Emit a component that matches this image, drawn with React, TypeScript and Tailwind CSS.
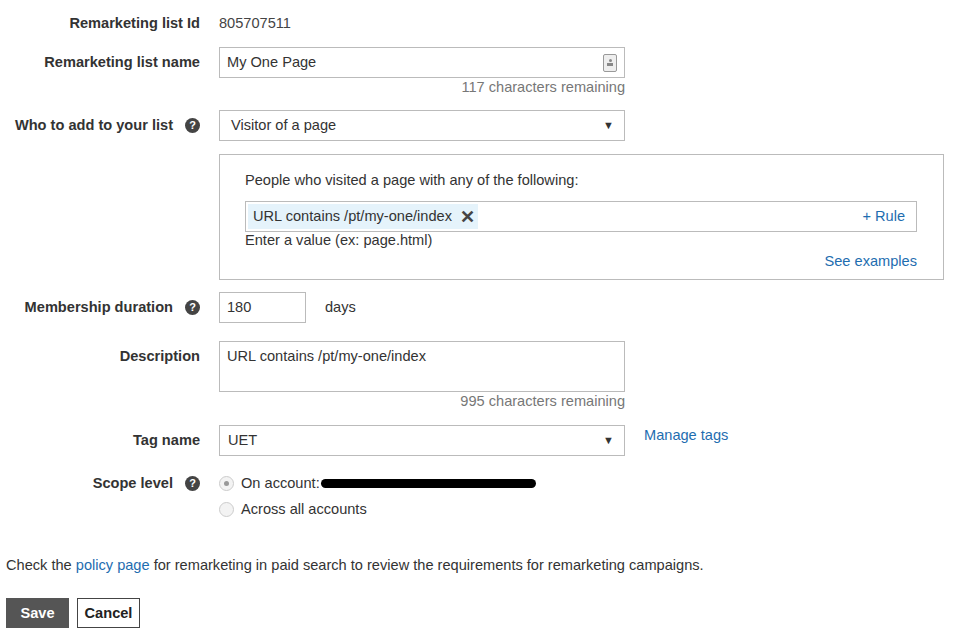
import React from "react";

const Help = () => (
  <span className="ml-[12px] inline-flex h-[15px] w-[15px] items-center justify-center rounded-full bg-[#444] text-[11px] font-bold leading-none text-white">?</span>
);

const Label = ({ children, help }: { children: React.ReactNode; help?: boolean }) => (
  <div className="flex w-[200px] shrink-0 items-center justify-end font-bold text-[#333]">
    {children}
    {help && <Help />}
  </div>
);

const Caret = () => <span className="text-[11px] text-[#333]">▼</span>;

export default function App() {
  return (
    <div className="relative h-[641px] w-[956px] bg-white text-[14.6px] leading-[17px] text-[#333]" style={{ fontFamily: '"Liberation Sans", Arial, sans-serif' }}>
      <div className="pt-[14px]">
        <div className="flex h-[18px] items-center gap-[19px]">
          <Label>Remarketing list Id</Label>
          <span className="text-[#444]">805707511</span>
        </div>

        <div className="mt-[15px] flex items-center gap-[19px]">
          <Label>Remarketing list name</Label>
          <div className="flex h-[31px] w-[406px] items-center justify-between border border-[#bbb] px-[7px]">
            <span>My One Page</span>
            <span className="flex h-[18px] w-[14px] flex-col items-center justify-center gap-[1px] rounded-[2px] border border-[#999] bg-[#eee]">
              <span className="h-[3px] w-[3px] rounded-full bg-[#888]"></span>
              <span className="h-[3px] w-[6px] bg-[#888]"></span>
            </span>
          </div>
        </div>
        <div className="ml-[219px] w-[406px] pt-[1px] text-right text-[#777]">117 characters remaining</div>

        <div className="mt-[14px] flex items-center gap-[19px]">
          <Label help>Who to add to your list</Label>
          <div className="flex h-[31px] w-[406px] items-center justify-between border border-[#bbb] pl-[11px] pr-[10px]">
            <span>Visitor of a page</span>
            <Caret />
          </div>
        </div>

        <div className="ml-[219px] mt-[13px] h-[126px] w-[725px] border border-[#bbb] pl-[25px] pr-[26px] pt-[17px]">
          <div>People who visited a page with any of the following:</div>
          <div className="mt-[12px] flex h-[31px] items-center justify-between border border-[#bbb] p-[2px] pr-[11px]">
            <span className="flex h-full items-center gap-[8px] bg-[#e5f3fb] pl-[5px] pr-[3px]">
              URL contains /pt/my-one/index
              <span className="text-[18px] font-bold leading-none text-[#444]">✕</span>
            </span>
            <span className="text-[#1e6db0]">+ Rule</span>
          </div>
          <div>Enter a value (ex: page.html)</div>
          <div className="mt-[4px] text-right text-[#1e6db0]">See examples</div>
        </div>

        <div className="mt-[12px] flex items-center gap-[19px]">
          <Label help>Membership duration</Label>
          <div className="flex h-[31px] w-[87px] items-center border border-[#bbb] px-[7px]">180</div>
          <span>days</span>
        </div>

        <div className="mt-[18px] flex items-start gap-[19px]">
          <div className="pt-[7px]"><Label>Description</Label></div>
          <div className="h-[51px] w-[406px] border border-[#bbb] px-[7px] pt-[6px]">URL contains /pt/my-one/index</div>
        </div>
        <div className="ml-[219px] w-[406px] pt-[1px] text-right text-[#777]">995 characters remaining</div>

        <div className="mt-[15px] flex items-start gap-[19px]">
          <div className="flex h-[31px] items-center"><Label>Tag name</Label></div>
          <div className="flex h-[31px] w-[406px] items-center justify-between border border-[#bbb] pl-[8px] pr-[10px]">
            <span>UET</span>
            <Caret />
          </div>
          <span className="mt-[2px] text-[#1e6db0]">Manage tags</span>
        </div>

        <div className="mt-[19px] flex h-[17px] items-center gap-[19px]">
          <Label help>Scope level</Label>
          <div className="flex items-center gap-[7px]">
            <span className="flex h-[15px] w-[15px] items-center justify-center rounded-full border border-[#ccc] bg-[#f3f3f3]">
              <span className="h-[5px] w-[5px] rounded-full bg-[#999]"></span>
            </span>
            <span className="flex items-center">On account:<span className="ml-[1px] h-[9px] w-[215px] rounded-full bg-black"></span></span>
          </div>
        </div>
        <div className="ml-[219px] mt-[9px] flex h-[17px] items-center gap-[7px]">
          <span className="h-[15px] w-[15px] rounded-full border border-[#ccc] bg-[#f3f3f3]"></span>
          <span>Across all accounts</span>
        </div>

        <div className="ml-[6px] mt-[39px]">
          Check the <span className="text-[#1e6db0]">policy page</span> for remarketing in paid search to review the requirements for remarketing campaigns.
        </div>

        <div className="ml-[6px] mt-[24px] flex gap-[8px]">
          <button className="h-[30px] w-[63px] bg-[#555] font-bold text-white">Save</button>
          <button className="h-[30px] w-[63px] border border-[#444] bg-white font-bold text-[#222]">Cancel</button>
        </div>
      </div>
    </div>
  );
}
